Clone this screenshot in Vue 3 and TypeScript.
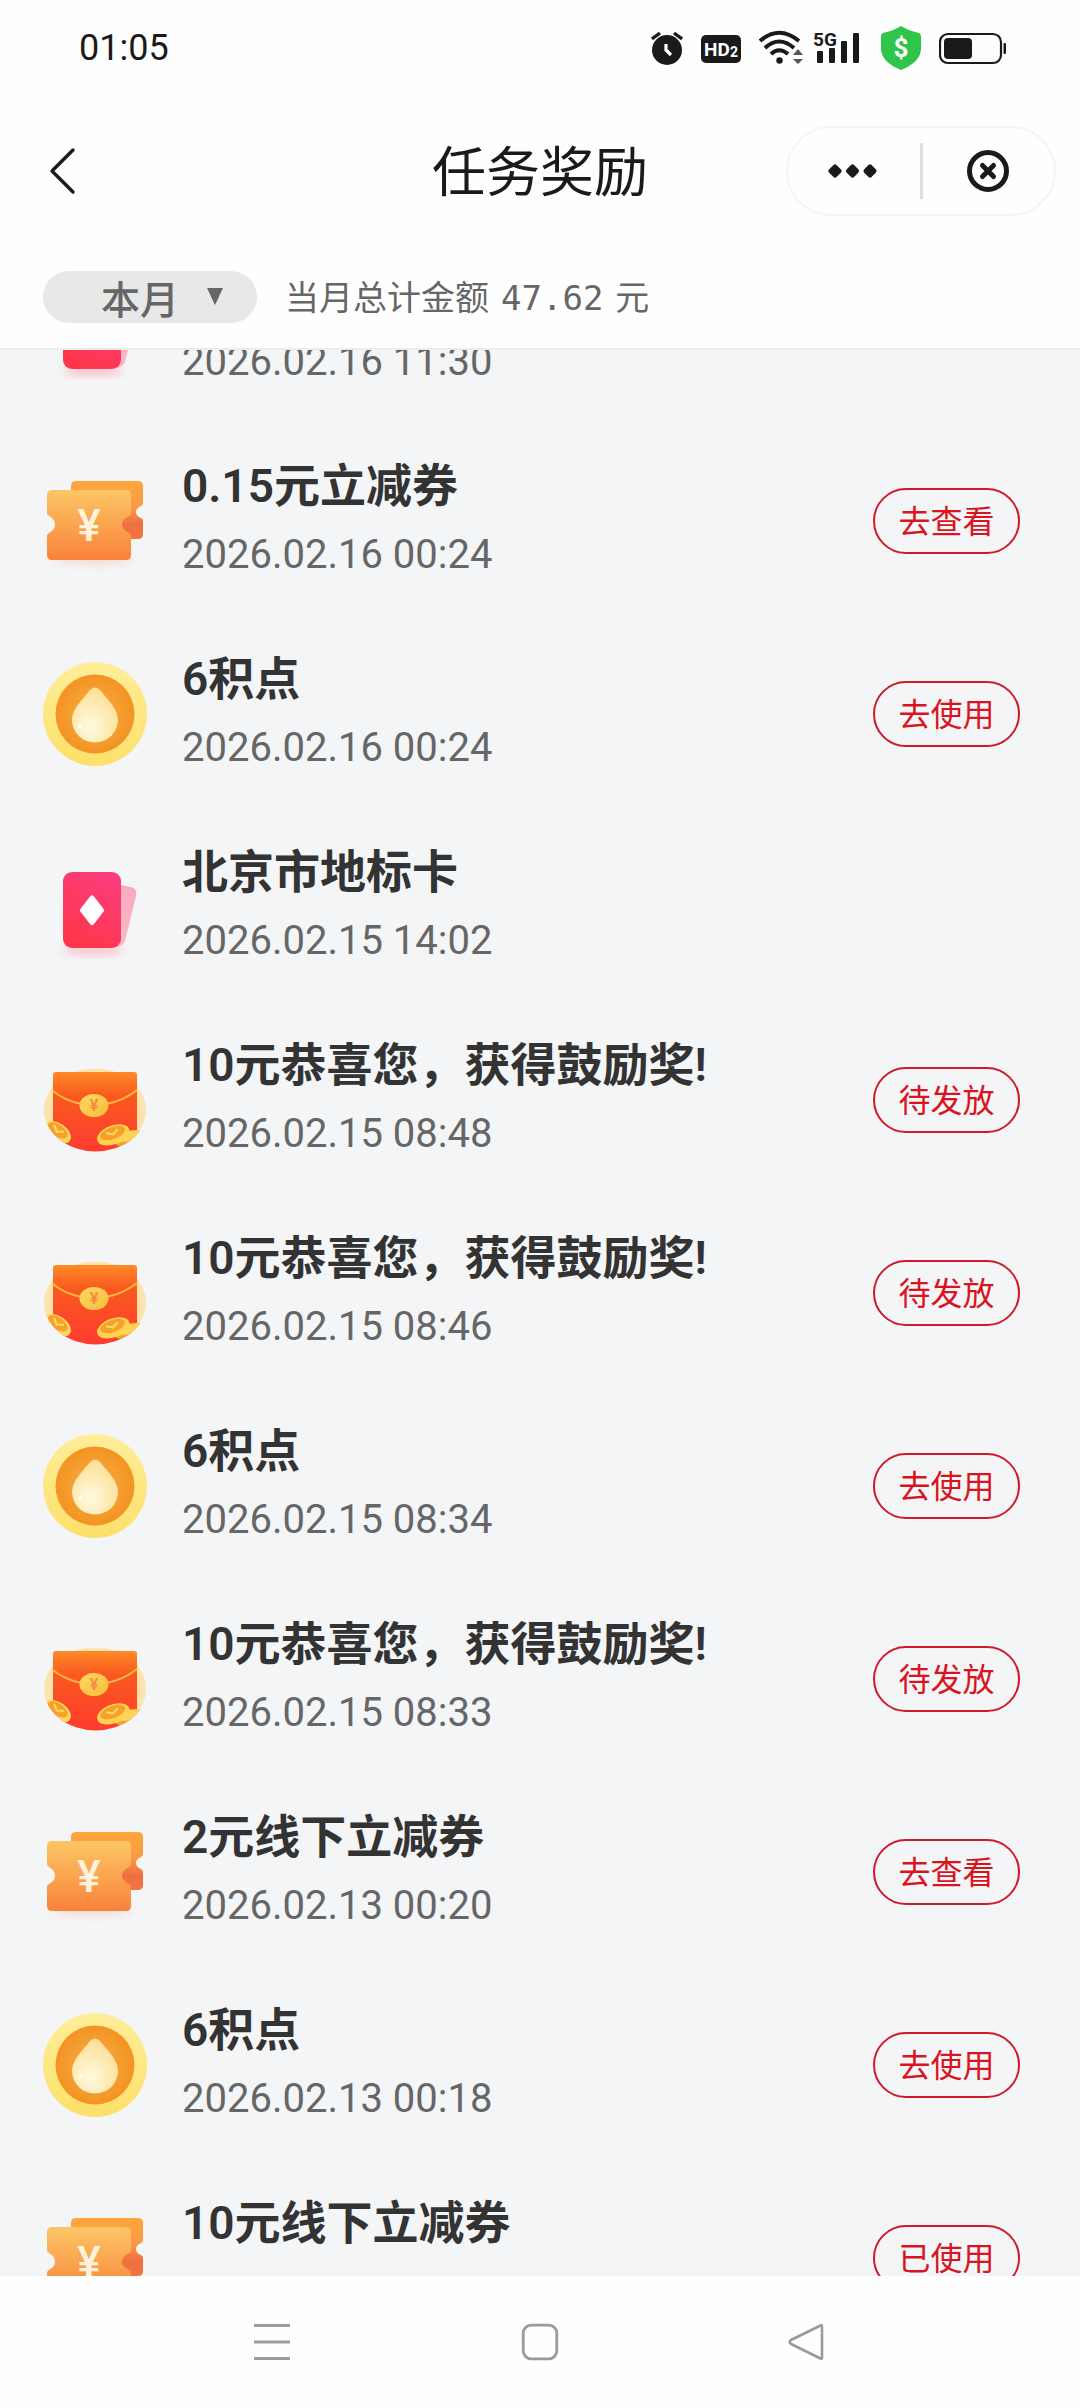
<script setup lang="ts">
import { onMounted, ref } from 'vue'

type Kind = 'ticket' | 'point' | 'card' | 'packet'

interface Reward {
  kind: Kind
  title: string
  time: string
  action?: string
}

const rewards: Reward[] = [
  { kind: 'card', title: '北京市地标卡', time: '2026.02.16 11:30' },
  { kind: 'ticket', title: '0.15元立减券', time: '2026.02.16 00:24', action: '去查看' },
  { kind: 'point', title: '6积点', time: '2026.02.16 00:24', action: '去使用' },
  { kind: 'card', title: '北京市地标卡', time: '2026.02.15 14:02' },
  { kind: 'packet', title: '10元恭喜您，获得鼓励奖!', time: '2026.02.15 08:48', action: '待发放' },
  { kind: 'packet', title: '10元恭喜您，获得鼓励奖!', time: '2026.02.15 08:46', action: '待发放' },
  { kind: 'point', title: '6积点', time: '2026.02.15 08:34', action: '去使用' },
  { kind: 'packet', title: '10元恭喜您，获得鼓励奖!', time: '2026.02.15 08:33', action: '待发放' },
  { kind: 'ticket', title: '2元线下立减券', time: '2026.02.13 00:20', action: '去查看' },
  { kind: 'point', title: '6积点', time: '2026.02.13 00:18', action: '去使用' },
  { kind: 'ticket', title: '10元线下立减券', time: '2026.02.13 00:18', action: '已使用' },
]

const month = ref('本月')
const scroller = ref<HTMLElement | null>(null)

onMounted(() => {
  if (scroller.value) scroller.value.scrollTop = 119
})
</script>

<template>
  <div class="page">
    <!-- gradients shared by the reward icons -->
    <svg class="defs" width="0" height="0" aria-hidden="true">
      <defs>
        <linearGradient id="ticketFront" x1="0" y1="0" x2="0" y2="1">
          <stop offset="0" stop-color="#fcc665" />
          <stop offset="1" stop-color="#f9823a" />
        </linearGradient>
        <linearGradient id="ticketBack" x1="0" y1="0" x2="0" y2="1">
          <stop offset="0" stop-color="#ffa63c" />
          <stop offset="0.45" stop-color="#f99a45" />
          <stop offset="0.75" stop-color="#ee6f42" />
          <stop offset="1" stop-color="#f4743f" />
        </linearGradient>
        <linearGradient id="pointRim" x1="0" y1="0" x2="0" y2="1">
          <stop offset="0" stop-color="#ffee9a" />
          <stop offset="1" stop-color="#fde06a" />
        </linearGradient>
        <radialGradient id="pointFace">
          <stop offset="0" stop-color="#f8b04a" />
          <stop offset="1" stop-color="#f39322" />
        </radialGradient>
        <radialGradient id="pointDrop" cx="0.4" cy="0.7" r="0.7">
          <stop offset="0" stop-color="#fffae0" />
          <stop offset="1" stop-color="#fddf95" />
        </radialGradient>
        <linearGradient id="cardFront" x1="0.8" y1="0" x2="0.3" y2="1">
          <stop offset="0" stop-color="#fb3c7e" />
          <stop offset="1" stop-color="#ff3648" />
        </linearGradient>
        <linearGradient id="cardBack" x1="0" y1="0" x2="0" y2="1">
          <stop offset="0" stop-color="#f9a9be" />
          <stop offset="1" stop-color="#fbb9c4" />
        </linearGradient>
        <linearGradient id="packetBody" x1="0" y1="0" x2="0" y2="1">
          <stop offset="0" stop-color="#ff8a26" />
          <stop offset="0.3" stop-color="#f9591f" />
          <stop offset="1" stop-color="#ff3a30" />
        </linearGradient>
        <linearGradient id="gold" x1="0" y1="0" x2="1" y2="1">
          <stop offset="0" stop-color="#ffd862" />
          <stop offset="1" stop-color="#f7bd3c" />
        </linearGradient>
        <clipPath id="packetClip">
          <path d="M0 0H104V62A51 41 0 0 1 1 62Z" />
        </clipPath>
        <filter id="soft" x="-30%" y="-100%" width="160%" height="300%">
          <feGaussianBlur stdDeviation="4" />
        </filter>
      </defs>
    </svg>

    <div class="status">
      <time class="clock">01:05</time>
      <div class="status-icons">
        <svg width="32" height="44" viewBox="0 0 32 44" aria-label="闹钟">
          <circle cx="16" cy="24" r="15" fill="#1a1a1a" />
          <path d="M1 13L9 7M31 13L23 7" stroke="#1a1a1a" stroke-width="3.4" fill="none" />
          <path d="M15 18V24L20 29" stroke="#fff" stroke-width="3.2" fill="none" />
        </svg>
        <svg width="40" height="44" viewBox="0 0 40 44" aria-label="HD2">
          <rect y="9" width="40" height="28" rx="5" fill="#1a1a1a" />
          <text x="3" y="30" class="hd" font-size="19">HD</text>
          <text x="29" y="31" class="hd" font-size="14">2</text>
        </svg>
        <svg class="wifi" width="40" height="44" viewBox="0 0 40 44" aria-label="无线网络">
          <g fill="none" stroke="#1a1a1a" stroke-width="4">
            <path d="M1 15Q20 -1.500 40 15" />
            <path d="M6 22Q20 9 35 22" />
            <path d="M12 28Q20 20.500 29 28" />
          </g>
          <circle cx="20.500" cy="34.500" r="3.200" fill="#1a1a1a" />
          <path d="M34 29L39 23L44 29ZM34 33L39 38L44 33Z" fill="#555" />
        </svg>
        <svg class="cell" width="46" height="44" viewBox="0 0 46 44" aria-label="5G信号">
          <text x="-4" y="20" class="net">5G</text>
          <g fill="#1a1a1a">
            <rect x="0" y="25" width="6" height="12" rx="1" />
            <rect x="12" y="22" width="6" height="15" rx="1" />
            <rect x="24" y="15" width="6" height="22" rx="1" />
            <rect x="36" y="7" width="6" height="30" rx="1" />
          </g>
        </svg>
        <svg width="40" height="44" viewBox="0 0 40 44" aria-label="支付保护">
          <path d="M20 0Q28 5 38 7Q40 8 40 10V22Q40 36 20 44Q0 36 0 22V10Q0 8 2 7Q12 5 20 0Z" fill="#2fc54b" />
          <text x="20" y="31" class="dollar">$</text>
        </svg>
        <svg width="68" height="44" viewBox="0 0 68 44" aria-label="电量">
          <rect x="1" y="8" width="61" height="29" rx="8" fill="none" stroke="#1a1a1a" stroke-width="2.200" />
          <rect x="5" y="12" width="28" height="21" rx="4" fill="#1a1a1a" />
          <rect x="64.500" y="17" width="2.500" height="11" rx="1" fill="#1a1a1a" />
        </svg>
      </div>
    </div>

    <header class="header">
      <button class="back" type="button" aria-label="返回">
        <svg width="28" height="48" viewBox="0 0 28 48">
          <path d="M25 3L4 24L25 45" fill="none" stroke="#1a1a1a" stroke-width="3.400" stroke-linecap="round" stroke-linejoin="round" />
        </svg>
      </button>
      <h1 class="heading">任务奖励</h1>
      <div class="capsule">
        <button type="button" aria-label="更多">
          <svg width="52" height="40" viewBox="0 0 52 40" fill="#1a1a1a" stroke="#1a1a1a" stroke-width="5" stroke-linejoin="round">
            <path d="M7 16L11 20L7 24L3 20Z" />
            <path d="M24.500 16L28.500 20L24.500 24L20.500 20Z" />
            <path d="M42 16L46 20L42 24L38 20Z" />
          </svg>
        </button>
        <span class="divider"></span>
        <button type="button" aria-label="关闭">
          <svg width="44" height="44" viewBox="0 0 44 44" fill="none" stroke="#1a1a1a" stroke-width="5">
            <circle cx="22" cy="22" r="18.500" />
            <path d="M16.500 16.500L27.500 27.500M27.500 16.500L16.500 27.500" stroke-linecap="round" />
          </svg>
        </button>
      </div>
    </header>

    <section class="filter">
      <div class="month">
        <select v-model="month" aria-label="月份">
          <option value="本月">本月</option>
        </select>
        <svg class="caret" width="16" height="17" viewBox="0 0 16 17" aria-hidden="true">
          <path d="M0 0H16L8 17Z" fill="#666" />
        </svg>
      </div>
      <p class="total">
        <span>当月总计金额</span>
        <span class="amount">47.62</span>
        <span>元</span>
      </p>
    </section>

    <main ref="scroller" class="scroller">
      <ul class="list">
        <li v-for="(item, i) in rewards" :key="i" class="row">
          <svg v-if="item.kind === 'ticket'" class="icon" viewBox="0 0 104 104">
            <ellipse cx="50" cy="90" rx="40" ry="6" fill="#f7b9a8" opacity="0.4" filter="url(#soft)" />
            <path d="M33 12H95Q100 12 100 17V34Q100 36 98 37Q93 39 93 43Q93 47 98 49Q100 50 100 52V65Q100 70 95 70H28V17Q28 12 33 12Z" fill="url(#ticketBack)" />
            <path d="M9 21H83Q88 21 88 26V44Q88 46 86 47Q79 50 79 55.500Q79 61 86 64Q88 65 88 67V86Q88 91 83 91H9Q4 91 4 86V67Q4 65 6 64Q12 61 12 55.500Q12 50 6 47Q4 46 4 44V26Q4 21 9 21Z" fill="url(#ticketFront)" />
            <text x="46" y="72" class="yen">¥</text>
          </svg>

          <svg v-else-if="item.kind === 'point'" class="icon" viewBox="0 0 104 104">
            <circle cx="52" cy="52" r="52" fill="url(#pointRim)" />
            <circle cx="52" cy="52" r="39.500" fill="url(#pointFace)" />
            <path d="M52 25.500Q54.500 25.500 57 28L67 40Q75 50 75 58A23 22.500 0 0 1 29 58Q29 50 37 40L47 28Q49.500 25.500 52 25.500Z" fill="url(#pointDrop)" />
            <circle cx="37" cy="64" r="2" fill="#fff" opacity="0.8" />
          </svg>

          <svg v-else-if="item.kind === 'card'" class="icon" viewBox="0 0 104 104">
            <ellipse cx="50" cy="95" rx="30" ry="5" fill="#ff8aa0" opacity="0.5" filter="url(#soft)" />
            <path d="M72 29L88 32Q95 34 93 41L82 86Q80 91 74 92Z" fill="url(#cardBack)" />
            <rect x="20" y="17" width="58" height="76" rx="9" fill="url(#cardFront)" />
            <path d="M49 43L58.500 55.300L49 67.500L39.500 55.300Z" fill="#fff" stroke="#fff" stroke-width="5" stroke-linejoin="round" />
          </svg>

          <svg v-else class="icon" viewBox="0 0 104 104">
            <ellipse cx="52" cy="61.700" rx="51" ry="41.300" fill="#ffe3ae" />
            <g clip-path="url(#packetClip)">
              <path d="M13 24H91Q94 24 94 27V104H10V27Q10 24 13 24Z" fill="url(#packetBody)" />
              <path d="M10 43Q22 53 39 56M63 56Q80 53 94 42" fill="none" stroke="#ffb640" stroke-width="2" />
              <ellipse cx="86" cy="90" rx="15" ry="7" transform="rotate(-18 86 90)" fill="#f0a62e" />
              <ellipse cx="88" cy="88" rx="14" ry="5" transform="rotate(-12 88 88)" fill="#ffd35a" />
              <g transform="rotate(35 16 84)">
                <ellipse cx="15" cy="85" rx="15" ry="9" fill="#ffd862" />
                <ellipse cx="14" cy="83.500" rx="11.500" ry="6" fill="#f5a12c" />
                <path d="M8 81L14 85L20 81" fill="none" stroke="#ffd862" stroke-width="2" />
              </g>
              <g transform="rotate(-20 70 86)">
                <ellipse cx="70" cy="87" rx="17" ry="9.500" fill="#ffd34f" />
                <ellipse cx="70" cy="85" rx="13" ry="6" fill="#f5a12c" />
                <path d="M64 83L70 86.500L76 83" fill="none" stroke="#ffd862" stroke-width="2" />
              </g>
            </g>
            <ellipse cx="51" cy="57.500" rx="14.500" ry="11.500" fill="url(#gold)" />
            <text x="51" y="63" class="seal">¥</text>
          </svg>

          <div class="info">
            <h2 class="title">{{ item.title }}</h2>
            <time class="date">{{ item.time }}</time>
          </div>
          <button v-if="item.action" class="action" type="button">{{ item.action }}</button>
        </li>
      </ul>
    </main>

    <nav class="navbar">
      <button type="button" aria-label="最近任务">
        <svg width="40" height="40" viewBox="0 0 40 40">
          <path d="M2 3.500H38M2 20H38M2 36.500H38" stroke="#9a9a9a" stroke-width="3" />
        </svg>
      </button>
      <button type="button" aria-label="主页">
        <svg width="40" height="40" viewBox="0 0 40 40">
          <rect x="3.200" y="3.200" width="33.600" height="33.600" rx="8" fill="none" stroke="#9a9a9a" stroke-width="2.800" />
        </svg>
      </button>
      <button type="button" aria-label="返回上一页">
        <svg width="40" height="40" viewBox="0 0 40 40">
          <path d="M32.500 3.500Q34 2.500 34 4.500V35.500Q34 37.500 32.500 36.500L3 22Q0.500 20 3 18Z" fill="none" stroke="#9a9a9a" stroke-width="2.600" stroke-linejoin="round" />
        </svg>
      </button>
    </nav>
  </div>
</template>

<style>
body {
  background: #fefefe;
}
</style>

<style scoped>
.page {
  display: flex;
  flex-direction: column;
  height: 100vh;
  background: #fefefe;
  color: #1a1a1a;
  font-family: Roboto, "Noto Sans CJK SC", sans-serif;
}

.defs {
  position: absolute;
}

svg {
  display: block;
  flex: none;
}

button {
  display: flex;
  align-items: center;
  justify-content: center;
  margin: 0;
  padding: 0;
  border: 0;
  background: none;
  font-family: inherit;
  cursor: pointer;
}

.status {
  display: flex;
  flex: none;
  align-items: center;
  justify-content: space-between;
  height: 96px;
  padding: 0 73px 0 79px;
}

.clock {
  font-size: 36px;
  line-height: 48px;
}

.status-icons {
  display: flex;
  align-items: center;
  gap: 18px;
}

.wifi,
.cell {
  overflow: visible;
}

.hd {
  fill: #fff;
  font-weight: 700;
}

.net {
  fill: #1a1a1a;
  font-size: 19px;
  font-weight: 700;
}

.dollar {
  fill: #fff;
  font-size: 26px;
  font-weight: 700;
  text-anchor: middle;
}

.header {
  display: grid;
  grid-template-columns: 1fr auto 1fr;
  flex: none;
  align-items: center;
  height: 150px;
  padding: 0 24px 0 48px;
}

.back {
  justify-self: start;
}

.heading {
  margin: 0;
  padding: 6px 24px 0 0;
  font-size: 54px;
  font-weight: 400;
  line-height: 72px;
}

.capsule {
  display: flex;
  align-items: center;
  justify-self: end;
  box-sizing: border-box;
  width: 270px;
  height: 90px;
  border: 2px solid #f5f5f5;
  border-radius: 45px;
}

.capsule button {
  flex: 1;
  height: 100%;
}

.divider {
  width: 3px;
  height: 56px;
  background: #dedede;
}

.filter {
  display: flex;
  flex: none;
  align-items: center;
  gap: 28px;
  height: 102px;
  padding: 0 43px;
  border-bottom: 2px solid #ececec;
}

.month {
  position: relative;
  display: flex;
  align-items: center;
  width: 214px;
  height: 52px;
  border-radius: 26px;
  background: #e8e8e8;
}

.month select {
  flex: 1;
  height: 60px;
  margin: 0;
  padding: 0 50px 0 58px;
  appearance: none;
  border: 0;
  background: none;
  color: #666;
  font-family: "Noto Sans CJK SC", sans-serif;
  font-size: 39px;
  font-weight: 500;
}

.caret {
  position: absolute;
  top: 17px;
  right: 34px;
  pointer-events: none;
}

.total {
  display: flex;
  align-items: baseline;
  gap: 12px;
  margin: 0;
  color: #666;
  font-family: "Noto Sans CJK SC", sans-serif;
  font-size: 34px;
  line-height: 52px;
}

.amount {
  font-family: "DejaVu Sans Mono", monospace;
}

.scroller {
  flex: 1;
  min-height: 0;
  overflow-y: auto;
  background: #f4f5f7;
  scrollbar-width: none;
}

.list {
  margin: 0;
  padding: 0;
  list-style: none;
}

.row {
  display: flex;
  align-items: center;
  height: 193px;
  padding: 0 60px 0 43px;
}

.icon {
  width: 104px;
  height: 104px;
}

.yen {
  fill: #fff3df;
  font-size: 44px;
  font-weight: 500;
  text-anchor: middle;
}

.seal {
  fill: #f08a3c;
  font-size: 16px;
  font-weight: 500;
  text-anchor: middle;
}

.info {
  flex: 1;
  min-width: 0;
  margin-left: 35px;
}

.title {
  margin: 0;
  color: #333;
  font-size: 46px;
  font-weight: 600;
  line-height: 68px;
}

.date {
  display: block;
  color: #666;
  font-size: 40px;
  line-height: 70px;
}

.action {
  box-sizing: border-box;
  width: 147px;
  height: 66px;
  padding-top: 2px;
  border: 2px solid #cf1a2d;
  border-radius: 33px;
  color: #d9141e;
  font-size: 32px;
  line-height: 44px;
}

.navbar {
  display: flex;
  flex: none;
  align-items: center;
  justify-content: space-around;
  height: 132px;
  padding: 0 138px;
}
</style>
